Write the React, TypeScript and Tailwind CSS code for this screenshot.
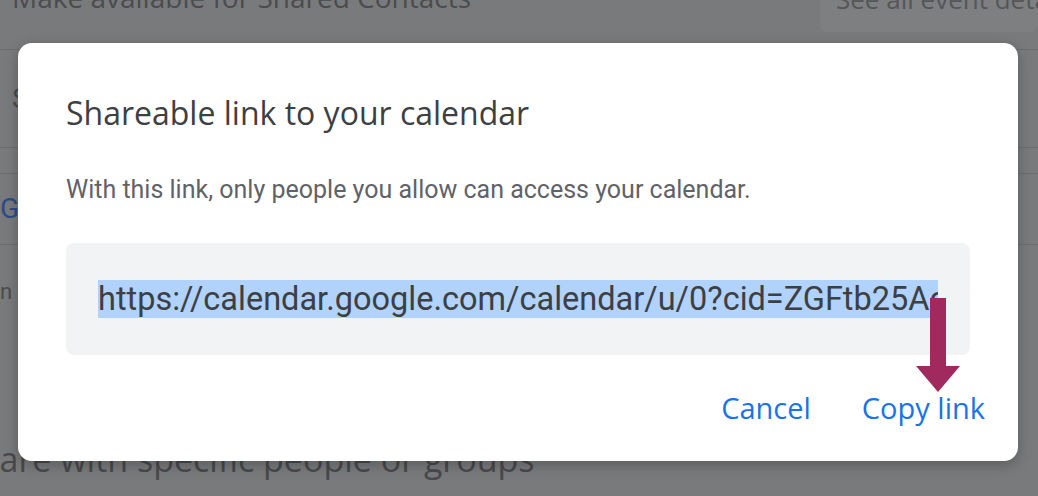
export default function App() {
  const url = "https://calendar.google.com/calendar/u/0?cid=ZGFtb25AcGFpZ2UuY29t";

  return (
    <div className="relative h-[496px] w-[1038px] overflow-hidden bg-[#797a7c] font-['Roboto',sans-serif]">
      {/* dimmed settings page behind the dialog */}
      <div className="flex h-[50px] items-start justify-between border-b border-[#6d6e70]">
        <div className="-mt-[24px] whitespace-nowrap pl-[12px] font-['Open_Sans',sans-serif] text-[28px] text-[#4b4c4e]">
          Make available for Shared Contacts
        </div>
        <div className="-mt-[8px] h-[40px] w-[218px] whitespace-nowrap rounded-b-[8px] bg-[#7e7f81] pl-[16px] font-['Open_Sans',sans-serif] text-[26px] leading-[14px] text-[#555658]">
          See all event details
        </div>
      </div>
      <div className="flex h-[98px] items-center border-b border-[#6d6e70] pl-[12px] text-[28px] text-[#4b4c4e]">
        Share with
      </div>
      <div className="h-[26px] border-b border-[#6d6e70]"></div>
      <div className="flex h-[71px] items-center border-b border-[#6d6e70] text-[28px] text-[#2b4c8a]">
        Go
      </div>
      <div className="pt-[30px] text-[22px] text-[#4b4c4e]">n more</div>
      <div className="mt-[126px] -ml-[40px] whitespace-nowrap font-['Open_Sans',sans-serif] text-[34px] text-[#48494b]">
        Share with specific people or groups
      </div>

      {/* dialog */}
      <div className="absolute left-[18px] top-[43px] flex h-[418px] w-[1000px] flex-col rounded-[14px] bg-white px-[48px] pt-[50px] shadow-[0_4px_14px_rgba(0,0,0,0.25)]">
        <h2 className="font-['Open_Sans',sans-serif] text-[32px] leading-[40px] text-[#3c4043]">
          Shareable link to your calendar
        </h2>
        <p className="mt-[41px] whitespace-nowrap text-[25px] leading-[32px] text-[#5f6368]">
          With this link, only people you allow can access your calendar.
        </p>
        <div className="mt-[37px] flex h-[112px] items-center rounded-[8px] bg-[#f1f3f4] px-[32px]">
          <div className="overflow-hidden whitespace-nowrap">
            <span className="bg-[#b1d2fb] text-[32.5px] leading-[38px] text-[#3c4043]">{url}</span>
          </div>
        </div>
        <div className="mt-[35px] -mr-[15px] flex justify-end gap-[51px] font-['Open_Sans',sans-serif] text-[29px] leading-[36px] font-medium text-[#1a73e8]">
          <button type="button">Cancel</button>
          <button type="button">Copy link</button>
        </div>
      </div>

      {/* annotation arrow */}
      <svg className="absolute left-[914px] top-[296px]" width="48" height="98" viewBox="0 0 48 98">
        <rect x="16" y="2" width="16" height="70" fill="#a0295e" />
        <polygon points="2,70 46,70 24,96" fill="#a0295e" />
      </svg>
    </div>
  );
}
